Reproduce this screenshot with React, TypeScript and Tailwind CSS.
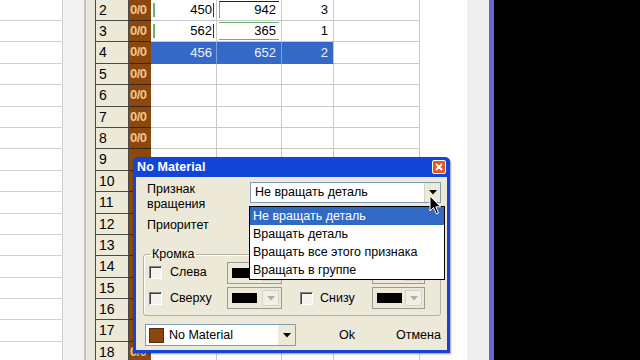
import React from "react";

type Row = { n: number; c1?: string; c2?: string; c3?: string; sel?: boolean; mark?: number; hideMat?: boolean };

const rows: Row[] = [
  { n: 2, c1: "450", c2: "942", c3: "3", mark: 1 },
  { n: 3, c1: "562", c2: "365", c3: "1", mark: 2 },
  { n: 4, c1: "456", c2: "652", c3: "2", sel: true },
  ...Array.from({ length: 14 }, (_, i) => ({ n: i + 5, hideMat: i + 5 >= 9 && i + 5 <= 17 })),
];

function Tri({ color = "#000" }: { color?: string }) {
  return (
    <svg width="8" height="5" viewBox="0 0 8 5">
      <path d="M0 0 L8 0 L4 4.5 Z" fill={color} />
    </svg>
  );
}

function Check() {
  return (
    <div className="w-[13px] h-[13px] shrink-0 bg-[#f4f3ee] border-t border-l border-t-[#808080] border-l-[#808080] border-b border-r border-b-white border-r-white shadow-[inset_1px_1px_0_#404040]" />
  );
}

function ColorCombo({ w }: { w: string }) {
  return (
    <div className={`${w} h-[22px] shrink-0 flex items-center bg-[#ece9d8] border border-[#9a9a90] pl-[4px] pr-[2px]`}>
      <div className="w-[25px] h-[10px] bg-black" />
      <div className="flex-1" />
      <div className="w-[17px] h-[16px] flex items-center justify-center border border-[#d6d3c8] bg-[#f1efe6]">
        <Tri color="#b0ada4" />
      </div>
    </div>
  );
}

export default function App() {
  return (
    <div className="relative w-[640px] h-[360px] overflow-hidden bg-black flex font-['Liberation_Sans',sans-serif] text-black">
      {/* left pane */}
      <div className="w-[63px] h-full bg-white border-r border-[#cfcfcf] flex flex-col mt-[-0.4px]">
        {rows.map((r) => (
          <div key={r.n} className="h-[21.4px] shrink-0 border-b border-[#d2d2d2]" />
        ))}
      </div>
      <div className="w-[21px] h-full bg-[#f3f3f3]" />
      <div className="w-[2px] h-full bg-[#c4c4c4]" />
      <div className="w-[9px] h-full bg-[#e8e6dd]" />

      {/* grid */}
      <div className="w-[325px] h-full bg-white flex flex-col mt-[-0.4px]">
        {rows.map((r) => (
          <div key={r.n} className="h-[21.4px] shrink-0 flex">
            <div className="w-[34px] h-full bg-[#ece9d8] border-l border-r border-b border-[#4a4a44] pl-[3px] text-[14px] leading-[20px]">
              {r.n}
            </div>
            <div className="w-[22px] h-full bg-[#8a480f] border-b border-[#3b2410] text-[13px] leading-[20px] text-[#f4c488] font-bold tracking-[-0.5px] pl-[1px]">
              {r.hideMat ? "" : "0/0"}
            </div>
            <div
              className={`w-[66px] h-full border-r border-b flex items-center justify-end pr-[4px] text-[13px] ${
                r.sel ? "bg-[#3569c8] text-[#eef2ff] border-r-[#7d9ee0] border-b-[#3569c8]" : "border-[#c9c9c9]"
              }`}
            >
              {r.mark ? <div className="w-[2px] h-[14px] bg-[#6bb26b] mr-auto ml-[2px]" /> : null}
              <span>{r.c1}</span>
              {r.mark ? <div className="w-[1px] h-[14px] bg-[#333] ml-[1px] mr-[-2px]" /> : null}
            </div>
            <div
              className={`w-[65px] h-full border-r border-b flex px-[2px] text-[13px] ${
                r.sel ? "bg-[#3569c8] text-[#eef2ff] border-r-[#7d9ee0] border-b-[#3569c8]" : "border-[#c9c9c9]"
              }`}
            >
              <div
                className={`flex-1 flex items-center justify-end pr-[3px] ${
                  r.mark === 1 ? "border-t border-t-[#222] border-l border-l-[#6bb26b] mt-[1px] mb-[2px]" : ""
                } ${r.mark === 2 ? "border-t border-b border-[#6bb26b] mt-[1px] mb-[1px]" : ""}`}
              >
                {r.c2}
              </div>
            </div>
            <div
              className={`w-[52px] h-full border-r border-b flex items-center justify-end pr-[5px] text-[13px] ${
                r.sel ? "bg-[#3569c8] text-[#eef2ff] border-b-[#3569c8] border-r-[#c9c9c9]" : "border-[#c9c9c9]"
              }`}
            >
              {r.c3}
            </div>
            <div className="w-[86px] h-full border-r border-b border-[#c9c9c9]" />
          </div>
        ))}
      </div>
      <div className="w-[47px] h-full bg-white" />
      <div className="w-[22px] h-full bg-[#efefef]" />
      <div className="w-[5px] h-full bg-[#6a68c8]" />

      {/* dialog */}
      <div className="absolute left-[133px] top-[157px] w-[317px] h-[196px] bg-[#1145d8] rounded-t-[5px] flex flex-col px-[3px] pb-[3px] shadow-[1px_1px_2px_rgba(0,0,0,0.4)]">
        <div className="h-[20px] shrink-0 flex items-center justify-between pl-[1px] pr-[1px]">
          <span className="text-white font-bold text-[12.5px] tracking-[0.1px]">No Material</span>
          <div className="w-[14px] h-[14px] rounded-[2px] bg-[#e2572a] border border-white flex items-center justify-center">
            <svg width="8" height="8" viewBox="0 0 8 8">
              <path d="M1 1 L7 7 M7 1 L1 7" stroke="#fff" strokeWidth="2" />
            </svg>
          </div>
        </div>
        <div className="relative flex-1 bg-[#ece9d8] flex flex-col pt-[5px] text-[12.5px]">
          {/* row 1 */}
          <div className="h-[36px] shrink-0 flex">
            <div className="w-[114px] pl-[11px] leading-[15px]">
              Признак
              <br />
              вращения
            </div>
            <div className="w-[191px] h-[21px] bg-white border border-[#7f9db9] flex items-center">
              <span className="pl-[4px] flex-1 leading-[15px]">Не вращать деталь</span>
              <div className="w-[16px] h-[19px] bg-[#ece9d8] border-l border-[#d8d4c4] flex items-center justify-center">
                <Tri />
              </div>
            </div>
          </div>
          {/* row 2 */}
          <div className="h-[16px] shrink-0 pl-[11px] leading-[15px]">Приоритет</div>

          {/* group */}
          <fieldset className="ml-[7px] mt-[13px] w-[298px] border border-[#b4b2a6] rounded-[3px] px-[5px] pb-[6px] shadow-[inset_1px_1px_0_#fff]">
            <legend className="ml-[1px] px-[2px] leading-[15px]">Кромка</legend>
            <div className="flex flex-col gap-[4px]">
              <div className="h-[21px] flex items-center">
                <div className="w-[151px] flex items-center">
                  <Check />
                  <span className="ml-[8px] w-[57px]">Слева</span>
                  <ColorCombo w="w-[55px]" />
                </div>
                <div className="flex items-center">
                  <Check />
                  <span className="ml-[7px] w-[52px]" />
                  <ColorCombo w="w-[53px]" />
                </div>
              </div>
              <div className="h-[22px] flex items-center">
                <div className="w-[151px] flex items-center">
                  <Check />
                  <span className="ml-[8px] w-[57px]">Сверху</span>
                  <ColorCombo w="w-[55px]" />
                </div>
                <div className="flex items-center">
                  <Check />
                  <span className="ml-[7px] w-[52px]">Снизу</span>
                  <ColorCombo w="w-[53px]" />
                </div>
              </div>
            </div>
          </fieldset>

          {/* bottom row */}
          <div className="mt-[8px] h-[22px] flex items-center">
            <div className="ml-[9px] w-[151px] h-[22px] bg-white border border-[#7f9db9] flex items-center pl-[3px]">
              <div className="w-[15px] h-[15px] bg-[#8a4510] border border-[#5a2e0a]" />
              <span className="ml-[5px] flex-1">No Material</span>
              <div className="w-[17px] h-[20px] bg-[#ece9d8] flex items-center justify-center">
                <Tri />
              </div>
            </div>
            <span className="ml-[43px]">Ok</span>
            <span className="ml-[41px]">Отмена</span>
          </div>

          {/* dropdown list */}
          <div className="absolute left-[113px] top-[29px] w-[196px] h-[74px] bg-white border border-black flex flex-col">
            <div className="h-[18px] bg-[#316ac5] text-white px-[3px] leading-[18px]">Не вращать деталь</div>
            <div className="h-[18px] px-[3px] leading-[18px]">Вращать деталь</div>
            <div className="h-[18px] px-[3px] leading-[18px]">Вращать все этого признака</div>
            <div className="h-[18px] px-[3px] leading-[18px]">Вращать в группе</div>
          </div>
        </div>
      </div>

      {/* mouse cursor */}
      <svg className="absolute left-[429px] top-[195px]" width="14" height="21" viewBox="0 0 14 21">
        <path d="M1 1 L1 16 L4.5 12.5 L7.5 19 L9.5 18 L6.8 11.8 L11.5 11.8 Z" fill="#000" stroke="#fff" strokeWidth="1" />
      </svg>
    </div>
  );
}
